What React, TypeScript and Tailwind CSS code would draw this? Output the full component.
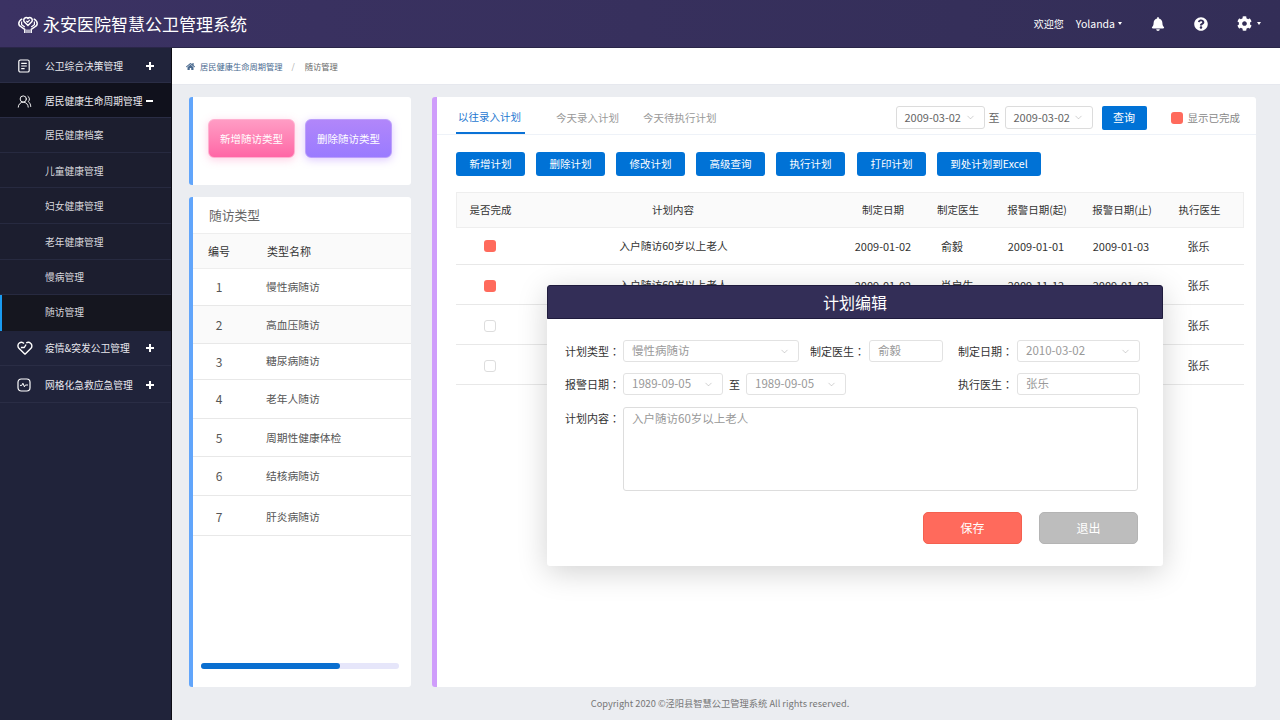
import React from 'react'
import { ChevronDown, UsersRound } from 'lucide-react'
import { FaBell, FaCog, FaHome, FaQuestionCircle } from 'react-icons/fa'

const sub = [
  { label: '居民健康档案', h: 'h-[35px]' },
  { label: '儿童健康管理', h: 'h-[35px] pt-[2px]' },
  { label: '妇女健康管理', h: 'h-[36px] pt-[2px]' },
  { label: '老年健康管理', h: 'h-[36px] pt-[2px]' },
  { label: '慢病管理', h: 'h-[35px]' },
]

const types = [
  { no: 1, name: '慢性病随访', h: 'h-[37px]', bg: 'bg-white' },
  { no: 2, name: '高血压随访', h: 'h-[38px] pt-[1px]', bg: 'bg-[#fafafa]' },
  { no: 3, name: '糖尿病随访', h: 'h-[36px]', bg: 'bg-white' },
  { no: 4, name: '老年人随访', h: 'h-[39px]', bg: 'bg-white' },
  { no: 5, name: '周期性健康体检', h: 'h-[38px] pt-[1px]', bg: 'bg-white' },
  { no: 6, name: '结核病随访', h: 'h-[39px]', bg: 'bg-white' },
  { no: 7, name: '肝炎病随访', h: 'h-[40px] pt-[3px]', bg: 'bg-white' },
]

const actions = ['新增计划', '删除计划', '修改计划', '高级查询', '执行计划']

const planCols = 'grid grid-cols-[67px_321px_76px_74px_84px_86px_80px] items-center text-center'

function Logo() {
  return (
    <svg viewBox="0 0 20 20" className="w-[20px] h-[20px] text-white" fill="none" stroke="currentColor">
      <path d="M10 11.500 6.500 8a2.500 2.500 0 0 1 0-3.600 2.500 2.500 0 0 1 3.500 0 2.500 2.500 0 0 1 3.500 0 2.500 2.500 0 0 1 0 3.600z" strokeWidth="1.500" />
      <path d="m8.300 6.800 1.400 1.400 2.100-2.300" strokeWidth="1.100" />
      <path d="M4.300 4.800C2 6 .8 8 .8 9.600c0 1.700 1.100 2.800 2.400 3.300l3.600 2.400v3.700" strokeWidth="1.500" />
      <path d="M15.700 4.800C18 6 19.200 8 19.200 9.600c0 1.700-1.100 2.800-2.400 3.300l-3.600 2.400v3.700" strokeWidth="1.500" />
      <path d="M3.600 7.500v3.300l3.200 2.300M16.400 7.500v3.300l-3.200 2.300M9 15.500v3.500M11 15.500v3.500" strokeWidth="1.200" />
    </svg>
  )
}

function DocIcon() {
  return (
    <svg viewBox="0 0 14 14" className="w-[14px] h-[14px]" fill="none" stroke="white" strokeWidth="1.200">
      <rect x="1.800" y="1" width="10.400" height="12" rx="1.600" />
      <path d="M4.200 4.400h5.600M4.200 7h5.600M4.200 9.600h3.400" />
    </svg>
  )
}

function HeartIcon() {
  return (
    <svg viewBox="0 0 16 16" className="w-[16px] h-[16px]" fill="none" stroke="white" strokeWidth="1.400" strokeLinejoin="round">
      <path d="M8 14.200 1.900 8.200C.4 6.600.7 4.200 2.300 3c1.500-1.100 3.500-.8 4.700.5M9.200 2.900c1.400-.9 3.200-.8 4.400.3 1.600 1.400 1.700 3.600.4 5L8 14.200" />
      <path d="m3.900 7.500 3.400 0 1.800-3" />
    </svg>
  )
}

function PulseIcon() {
  return (
    <svg viewBox="0 0 14 14" className="w-[14px] h-[14px]" fill="none" stroke="white" strokeWidth="1.200" strokeLinejoin="round">
      <rect x="1" y="1" width="12" height="12" rx="3.200" />
      <path d="M3 7.400h1.800l1.100-2.200 1.500 3.600 1-1.800H11" strokeWidth="1" />
    </svg>
  )
}

function Plus() {
  return <span className="relative block w-[8px] h-[8px] before:absolute before:left-0 before:top-[3px] before:w-[8px] before:h-[2px] before:bg-white after:absolute after:left-[3px] after:top-0 after:w-[2px] after:h-[8px] after:bg-white" />
}

function NavRow({ icon, label, h, bg, sign }: { icon: React.ReactNode; label: string; h: string; bg: string; sign: React.ReactNode }) {
  return (
    <div className={`${h} ${bg} flex items-center border-b border-[#2a2d45] text-[9.750px] text-[#e8e8ee]`}>
      <span className="w-[45px] pl-[17px] flex items-center shrink-0">{icon}</span>
      <span className="whitespace-nowrap w-[101px] shrink-0">{label}</span>
      <span className="flex items-center">{sign}</span>
    </div>
  )
}

function Select({ value, w, small }: { value: string; w: string; small?: boolean }) {
  return (
    <div className={`${w} ${small ? 'h-[23px] text-[11px] text-[#666] border-[#dcdcdc]' : 'h-[22px] text-[11.500px] text-[#999] border-[#e2e2e2]'} shrink-0 bg-white border rounded-[3px] flex items-center justify-between pl-[8px] pr-[8px]`}>
      <span className="whitespace-nowrap">{value}</span>
      <ChevronDown size={11} strokeWidth={1} className="text-[#999]" />
    </div>
  )
}

function Field({ label, w, children }: { label: string; w: string; children: React.ReactNode }) {
  return (
    <div className={`${w} shrink-0 flex items-center text-[11px] text-[#333]`}>
      <span className="whitespace-nowrap">{label}<span className="font-['Noto_Sans_CJK_TC']">：</span></span>
      {children}
    </div>
  )
}

export default function App() {
  return (
    <div className="relative w-[1280px] h-[720px] overflow-hidden flex flex-col bg-[#ebedf1] font-['Noto_Sans_CJK_SC','Noto_Sans',sans-serif]">
      {/* top bar */}
      <header className="h-[48px] shrink-0 flex items-center bg-gradient-to-r from-[#3b3263] to-[#332e57] border-b border-[#2a2648] text-white">
        <div className="flex items-center pl-[18px] flex-1">
          <Logo />
          <span className="ml-[5px] text-[17px] whitespace-nowrap">永安医院智慧公卫管理系统</span>
        </div>
        <div className="flex items-center text-[10px] pr-[19px]">
          <span>欢迎您</span>
          <span className="ml-[12px] text-[10.500px]">Yolanda</span>
          <span className="ml-[3px] border-x-[2.500px] border-x-transparent border-t-[3px] border-t-white" />
          <FaBell size={14} className="ml-[29px]" />
          <FaQuestionCircle size={14} className="ml-[29px]" />
          <FaCog size={15} className="ml-[29px]" />
          <span className="ml-[5px] border-x-[2.500px] border-x-transparent border-t-[3px] border-t-white" />
        </div>
      </header>

      <div className="flex flex-1 min-h-0">
        {/* sidebar */}
        <aside className="w-[172px] shrink-0 bg-[#20233a] border-r border-[#0c0c14]">
          <NavRow icon={<DocIcon />} label="公卫综合决策管理" h="h-[35px] pt-[2px]" bg="bg-[#20233a]" sign={<Plus />} />
          <NavRow icon={<UsersRound size={15} color="white" strokeWidth={1.500} />} label="居民健康生命周期管理" h="h-[35px] pt-[2px]" bg="bg-[#10111c]" sign={<span className="block w-[7px] h-[2px] bg-white" />} />
          {sub.map((s) => (
            <div key={s.label} className={`${s.h} flex items-center pl-[45px] bg-[#1c1e2f] border-b border-[#272a40] text-[9.750px] text-[#d8d8de]`}>
              {s.label}
            </div>
          ))}
          <div className="h-[36px] pb-[1px] flex items-center pl-[43px] bg-[#15161f] border-l-2 border-[#1a9bf0] text-[9.750px] text-[#d8d8de]">随访管理</div>
          <NavRow icon={<HeartIcon />} label="疫情&突发公卫管理" h="h-[35px]" bg="bg-[#20233a]" sign={<Plus />} />
          <NavRow icon={<PulseIcon />} label="网格化急救应急管理" h="h-[37px] pt-[2px]" bg="bg-[#20233a]" sign={<Plus />} />
        </aside>

        <main className="flex-1 min-w-0 flex flex-col">
          {/* breadcrumb */}
          <div className="h-[37px] shrink-0 flex items-center pl-[14px] pt-[1px] bg-white border-b border-[#e6e8ee] text-[8.250px]">
            <FaHome size={9} className="text-[#4a6a8f]" />
            <span className="ml-[5px] text-[#4a6a8f]">居民健康生命周期管理</span>
            <span className="ml-[9px] text-[#aaa]">/</span>
            <span className="ml-[10px] text-[#666]">随访管理</span>
          </div>

          <div className="flex flex-1 min-h-0 pt-[12px] pl-[17px]">
            {/* left column */}
            <div className="w-[222px] shrink-0 flex flex-col gap-[12px]">
              <div className="h-[88px] bg-white rounded-[3px] border-l-[4px] border-[#61a5fb] flex items-center pl-[15px] gap-[10px] pb-[5px]">
                <div className="w-[87px] h-[39px] flex items-center justify-center rounded-[6px] bg-gradient-to-b from-[#ff9cc4] to-[#ff66a6] border border-[#ffb0d0] shadow-[0_2px_8px_rgba(255,120,180,0.35)] text-[10.500px] text-white">新增随访类型</div>
                <div className="w-[87px] h-[39px] flex items-center justify-center rounded-[6px] bg-gradient-to-b from-[#b186fa] to-[#9a7bff] border border-[#bba0fb] shadow-[0_2px_8px_rgba(170,120,255,0.4)] text-[10.500px] text-white">删除随访类型</div>
              </div>

              <div className="h-[490px] bg-white rounded-[3px] border-l-[4px] border-[#61a5fb] flex flex-col">
                <div className="h-[36px] shrink-0 flex items-center pl-[16px] pb-[1px] text-[12.750px] text-[#666]">随访类型</div>
                <div className="h-[36px] shrink-0 flex items-center pt-[1px] bg-[#fafafa] border-y border-[#eeeeee] text-[11px] text-[#333]">
                  <span className="w-[74px] pl-[15px]">编号</span>
                  <span>类型名称</span>
                </div>
                {types.map((t) => (
                  <div key={t.no} className={`${t.h} ${t.bg} shrink-0 flex items-center border-b border-[#e8e8e8] text-[10.750px] text-[#555]`}>
                    <span className="w-[52px] text-center text-[12px]">{t.no}</span>
                    <span className="ml-[21px]">{t.name}</span>
                  </div>
                ))}
                <div className="mt-auto mb-[18px] ml-[8px] w-[198px] h-[6px] rounded-full bg-[#e6e6fa]">
                  <div className="w-[139px] h-[6px] rounded-full bg-[#0a6fd0]" />
                </div>
              </div>
            </div>

            {/* plan card */}
            <div className="ml-[21px] w-[824px] h-[590px] bg-white rounded-[3px] border-l-[5px] border-[#cf9dfb] flex flex-col">
              <div className="h-[38px] shrink-0 flex items-center pl-[19px] pr-[16px] pt-[4px] border-b border-[#eef2f8] text-[10.500px]">
                <div className="w-[69px] h-[33px] flex items-center justify-center pr-[2px] text-[#1f78d1] border-b-2 border-[#0a72d6]">以往录入计划</div>
                <span className="ml-[31px] text-[#999]">今天录入计划</span>
                <span className="ml-[24px] text-[#999]">今天待执行计划</span>
                <div className="ml-auto flex items-center">
                  <Select value="2009-03-02" w="w-[89px]" small />
                  <span className="ml-[4px] mr-[5px] text-[11px] text-[#666]">至</span>
                  <Select value="2009-03-02" w="w-[88px]" small />
                  <div className="ml-[9px] w-[45px] h-[24px] flex items-center justify-center rounded-[2px] bg-[#0072d6] text-[11px] text-white">查询</div>
                  <span className="ml-[24px] w-[12px] h-[12px] rounded-[3px] bg-[#ff6a5c]" />
                  <span className="ml-[5px] text-[#888]">显示已完成</span>
                </div>
              </div>

              <div className="flex pl-[19px] pt-[17px]">
                {actions.map((a) => (
                  <div key={a} className="w-[69px] h-[24px] mr-[11px] flex items-center justify-center rounded-[3px] bg-[#0072d6] text-[10.500px] text-white">{a}</div>
                ))}
                <div className="w-[69px] h-[24px] ml-[1px] mr-[11px] flex items-center justify-center rounded-[3px] bg-[#0072d6] text-[10.500px] text-white">打印计划</div>
                <div className="w-[104px] h-[24px] flex items-center justify-center rounded-[3px] bg-[#0072d6] text-[10.500px] text-white">到处计划到Excel</div>
              </div>

              <div className="ml-[19px] mt-[16px] w-[788px] text-[11px] leading-none text-[#333]">
                <div className={`${planCols} h-[36px] bg-[#fafafa] border border-[#eeeeee] text-[10.500px]`}>
                  <span>是否完成</span>
                  <span className="pr-[23px]">计划内容</span>
                  <span>制定日期</span>
                  <span>制定医生</span>
                  <span>报警日期(起)</span>
                  <span>报警日期(止)</span>
                  <span className="pr-[11px]">执行医生</span>
                </div>
                <div className={`${planCols} h-[37px] border-b border-[#e8e8e8]`}>
                  <span className="mx-auto w-[12px] h-[12px] rounded-[3px] bg-[#ff6a5c]" />
                  <span className="pr-[20px] text-[10.750px]">入户随访60岁以上老人</span>
                  <span className="pl-[2px]">2009-01-02</span>
                  <span className="pr-[10px]">俞毅</span>
                  <span>2009-01-01</span>
                  <span>2009-01-03</span>
                  <span className="pr-[11px]">张乐</span>
                </div>
                <div className={`${planCols} h-[40px] pt-[2px] border-b border-[#e8e8e8]`}>
                  <span className="mx-auto w-[12px] h-[12px] rounded-[3px] bg-[#ff6a5c]" />
                  <span className="pr-[20px] text-[10.750px]">入户随访60岁以上老人</span>
                  <span className="pl-[2px]">2009-01-02</span>
                  <span>肖启生</span>
                  <span>2009-11-12</span>
                  <span>2009-01-03</span>
                  <span className="pr-[11px]">张乐</span>
                </div>
                {[0, 1].map((i) => (
                  <div key={i} className={`${planCols} h-[40px] pt-[2px] border-b border-[#e8e8e8]`}>
                    <span className="mx-auto w-[12px] h-[12px] rounded-[3px] bg-white border border-[#dddddd]" />
                    <span />
                    <span />
                    <span />
                    <span />
                    <span />
                    <span className="pr-[11px]">张乐</span>
                  </div>
                ))}
              </div>
            </div>
          </div>

          <div className="h-[33px] shrink-0 flex items-center justify-center pr-[12px] pt-[1px] text-[9.250px] text-[#777]">
            Copyright 2020 ©泾阳县智慧公卫管理系统 All rights reserved.
          </div>
        </main>
      </div>

      {/* edit dialog */}
      <div className="absolute left-[547px] top-[285px] w-[616px] h-[281px] bg-white rounded-[3px] shadow-[0_6px_30px_rgba(0,0,0,0.18)] flex flex-col">
        <div className="h-[34px] shrink-0 flex items-center justify-center pb-[1px] rounded-t-[3px] bg-[#332e57] border border-[#1f1b3d] text-[16px] leading-none text-white">计划编辑</div>
        <div className="pl-[18px] pt-[21px] flex flex-col">
          <div className="flex items-center h-[22px]">
            <Field label="计划类型" w="w-[245px]">
              <div className="ml-[3px]"><Select value="慢性病随访" w="w-[176px]" /></div>
            </Field>
            <Field label="制定医生" w="w-[148px]">
              <div className="w-[74px] h-[22px] ml-[4px] border border-[#e2e2e2] rounded-[3px] flex items-center pl-[8px] text-[11.500px] text-[#999]">俞毅</div>
            </Field>
            <Field label="制定日期" w="w-[182px]">
              <div className="ml-[4px]"><Select value="2010-03-02" w="w-[123px]" /></div>
            </Field>
          </div>
          <div className="flex items-center h-[22px] mt-[11px]">
            <Field label="报警日期" w="w-[393px]">
              <div className="ml-[3px]"><Select value="1989-09-05" w="w-[100px]" /></div>
              <span className="mx-[6px]">至</span>
              <Select value="1989-09-05" w="w-[100px]" />
            </Field>
            <Field label="执行医生" w="w-[182px]">
              <div className="w-[123px] h-[22px] ml-[4px] border border-[#e2e2e2] rounded-[3px] flex items-center pl-[8px] text-[11.500px] text-[#999]">张乐</div>
            </Field>
          </div>
          <div className="flex mt-[12px]">
            <span className="text-[11px] text-[#333] leading-[22px] whitespace-nowrap">计划内容<span className="font-['Noto_Sans_CJK_TC']">：</span></span>
            <div className="ml-[3px] w-[515px] h-[84px] border border-[#dddddd] rounded-[3px] pl-[8px] pt-[2px] text-[11.500px] text-[#999]">入户随访60岁以上老人</div>
          </div>
          <div className="flex justify-end gap-[17px] pr-[25px] mt-[21px]">
            <div className="w-[99px] h-[32px] flex items-center justify-center rounded-[5px] bg-[#ff6a5c] border border-[#f4604f] text-[12px] text-white">保存</div>
            <div className="w-[99px] h-[32px] flex items-center justify-center rounded-[5px] bg-[#bdbdbd] border border-[#b4b4b4] text-[12px] text-white">退出</div>
          </div>
        </div>
      </div>
    </div>
  )
}
